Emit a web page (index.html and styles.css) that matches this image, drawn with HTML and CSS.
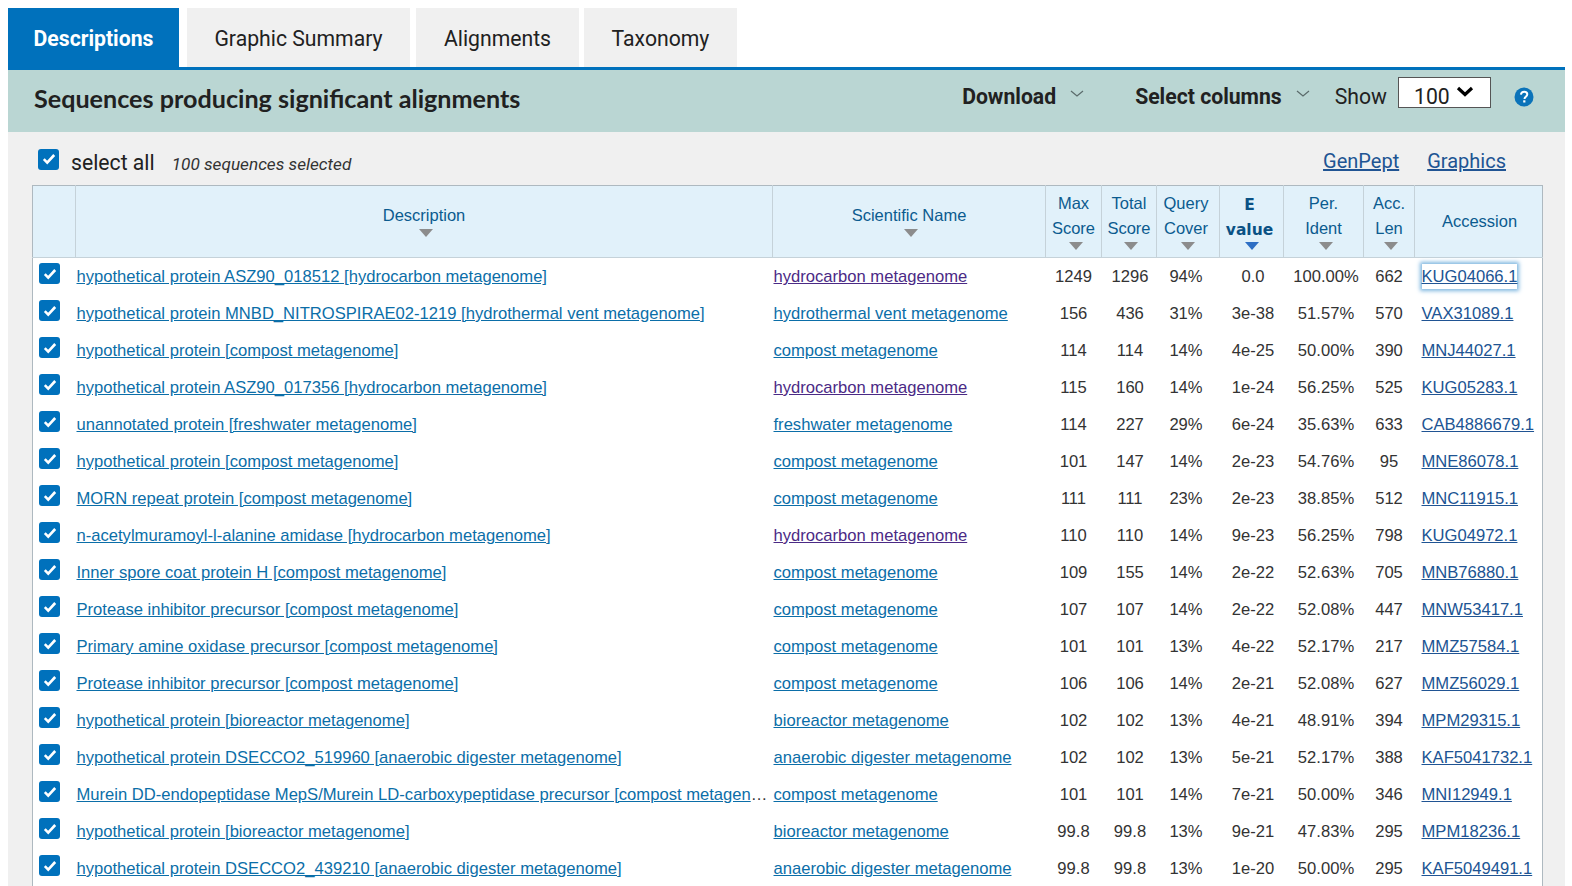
FILE: index.html
```html
<!DOCTYPE html>
<html lang="en">
<head>
  <meta charset="UTF-8" />
  <title>Descriptions</title>
  <link rel="stylesheet" href="styles.css">
</head>
<body>
  <div class="page">
    <nav class="tabs">
      <a class="tab active">Descriptions</a>
      <a class="tab tab-graphic">Graphic Summary</a>
      <a class="tab tab-align">Alignments</a>
      <a class="tab tab-tax">Taxonomy</a>
    </nav>

    <header class="band">
      <h1>Sequences producing significant alignments</h1>
      <div class="band-right">
        <span class="menu menu-download">Download</span>
        <svg class="chev chev-download" width="14" height="8" viewBox="0 0 14 8"><path d="M1 1l6 5 6-5" fill="none" stroke="#5b6b6b" stroke-width="1.2"/></svg>
        <span class="menu menu-select">Select columns</span>
        <svg class="chev chev-select" width="14" height="8" viewBox="0 0 14 8"><path d="M1 1l6 5 6-5" fill="none" stroke="#5b6b6b" stroke-width="1.2"/></svg>
        <span class="show">Show</span>
        <span class="select-box"><span class="select-value">100</span>
          <svg class="select-arrow" width="18" height="11" viewBox="0 0 18 11"><path d="M2 2l7 6.500 7-6.500" fill="none" stroke="#000" stroke-width="3.200"/></svg>
        </span>
        <svg class="help" width="20" height="20" viewBox="0 0 20 20"><circle cx="10" cy="10" r="9.5" fill="#0b73b9"/><path d="M6.9 7.6c.2-1.9 1.5-2.9 3.3-2.9 1.9 0 3.1 1.100 3.100 2.600 0 1.300-.7 1.900-1.600 2.500-.8.500-1.100.9-1.100 1.700v.4" fill="none" stroke="#fff" stroke-width="2"/><rect x="9.200" y="13.300" width="2.200" height="2.200" fill="#fff"/></svg>
      </div>
    </header>

    <section class="panel">
      <div class="toolbar">
        <span class="check check-all"><svg width="14" height="12" viewBox="0 0 14 12"><path d="M1.800 6.200l3.400 3.400 7-7.600" fill="none" stroke="#fff" stroke-width="2.600"/></svg></span>
        <span class="select-all">select all</span>
        <em class="selected">100 sequences selected</em>
        <span class="links"><a>GenPept</a><a>Graphics</a></span>
      </div>

      <table class="results">
        <colgroup>
          <col class="c-check"><col class="c-desc"><col class="c-sci"><col class="c-max"><col class="c-total"><col class="c-cover"><col class="c-eval"><col class="c-ident"><col class="c-len"><col class="c-acc">
        </colgroup>
        <thead>
          <tr>
            <th></th>
            <th><span class="head-one">Description</span><i class="sort"></i></th>
            <th><span class="head-one">Scientific Name</span><i class="sort"></i></th>
            <th>Max<br>Score<i class="sort"></i></th>
            <th>Total<br>Score<i class="sort"></i></th>
            <th>Query<br>Cover<i class="sort"></i></th>
            <th class="sorted">E<br>value<i class="sort"></i></th>
            <th>Per.<br>Ident<i class="sort"></i></th>
            <th>Acc.<br>Len<i class="sort"></i></th>
            <th class="head-acc">Accession</th>
          </tr>
        </thead>
        <tbody id="rows"></tbody>
      </table>
    </section>
  </div>
  <script src="rows.js"></script>
</body>
</html>
```

FILE: styles.css
```css
* { box-sizing: border-box; }
html, body { height: 886px; overflow: hidden; }
body { margin: 0; padding: 8px 7px 0 8px; background: #fff; font-family: "Liberation Sans", Arial, sans-serif; color: #333; }

.tabs { display: flex; height: 59px; }
.tab { display: flex; align-items: center; justify-content: center; padding-top: 1px; background: #f0f0f0; color: #212121; font: 400 21.200px Roboto, sans-serif; margin-right: 6px; }
.tab.active { width: 171px; margin-right: 8px; background: #0071bc; color: #fff; font-weight: 700; }
.tab-graphic { width: 223px; }
.tab-align { width: 163px; margin-right: 5px; }
.tab-tax { width: 153px; }

.band { display: flex; align-items: center; justify-content: space-between; height: 65px; padding: 0 31px 7px 26px; background: #bad6d3; border-top: 3px solid #0071bc; }
.band h1 { margin: 0; font: 700 25.150px Lato, sans-serif; color: #212121; }
.band-right { display: flex; align-items: center; margin-top: -2px; color: #212121; font: 400 21.200px Roboto, sans-serif; }
.menu { font-weight: 700; }
.chev { margin: -6px 0 0 14px; }
.chev-download { margin-right: 51px; }
.chev-select { margin-right: 25px; }
.select-box { display: flex; align-items: center; width: 93px; height: 31px; margin: -9px 0 0 11px; padding-left: 15px; background: #fff; border: 1px solid #555; }
.select-value { padding-top: 8px; }
.select-arrow { margin: -2px 0 0 6px; }
.help { margin-left: 23px; }

.panel { height: 760px; padding: 0 23px 0 24px; background: #f0f0f0; }
.toolbar { display: flex; align-items: center; height: 53px; padding: 6px 36px 0 6px; }
.check { display: inline-flex; align-items: center; justify-content: center; width: 21px; height: 21px; border-radius: 3px; background: #0071bc; }
.check-all { margin-top: -5px; }
.select-all { margin: 2px 0 0 12px; font: 400 21.200px Roboto, sans-serif; color: #212121; }
.selected { margin: 4px 0 0 17px; font: italic 400 17.200px Roboto, sans-serif; color: #333; }
.links { margin: -2px 0 0 auto; display: flex; gap: 28px; }
.links a { color: #205493; text-decoration: underline; font: 400 20px Roboto, sans-serif; }

.results { width: 1510px; table-layout: fixed; border-collapse: collapse; background: #fff; border: 1px solid #aeb9c0; border-bottom: 0; }
.c-check { width: 43px; } .c-desc { width: 697px; } .c-sci { width: 273px; } .c-max { width: 56px; } .c-total { width: 55px; }
.c-cover { width: 63px; } .c-eval { width: 64px; } .c-ident { width: 80px; } .c-len { width: 51px; } .c-acc { width: 128px; }
.results thead tr { height: 72px; }
.results th { position: relative; padding: 0 0 12px; background: #e1f1fa; border-left: 1px solid #c5d2d9; border-bottom: 1px solid #c5d2d9; color: #0b5b8f; font-weight: 400; font-size: 16.500px; line-height: 25px; text-align: center; vertical-align: middle; }
.results th:first-child { border-left: 0; }
.results th:nth-child(6) { padding-right: 4px; }
.results th.sorted { padding: 0 4px 8px 0; font-family: "DejaVu Sans", sans-serif; font-weight: 700; font-size: 15.500px; color: #0a5184; }
.head-acc { padding: 0 0 0 2px !important; }
.sort { position: absolute; left: 50%; bottom: 20px; margin-left: -5px; width: 0; height: 0; border-left: 7px solid transparent; border-right: 7px solid transparent; border-top: 8px solid #8c8c8c; }
.sorted .sort { margin-left: -7px; border-top-color: #2e6fc4; }
.results th:nth-child(6) .sort { margin-left: -7px; }
.results th:nth-child(n+4) .sort { bottom: 7px; }

.results td { height: 37px; padding: 2px 0 0; font-size: 16.600px; white-space: nowrap; overflow: hidden; text-overflow: ellipsis; text-align: center; color: #333; }
.results td.left { padding: 2px 5px 0 1px; text-align: left; }
.results td a { color: #0b6ea8; text-decoration: underline; }
.results td a.visited { color: #4b2a85; }
.results td.cell-check { padding: 0 0 0 6px; text-align: left; vertical-align: middle; }
.results td.cell-check .check { display: flex; margin-top: -5px; }
.results td:nth-child(6) { padding-right: 4px; }
.results td:nth-child(7) { padding-left: 3px; }
.results td:nth-child(8) { padding-left: 5px; }
.results td:nth-child(5) { padding-left: 2px; }
.results td.cell-acc { padding: 2px 0 0 7px; text-align: left; overflow: visible; }
.results td.cell-acc a { color: #205493; }
.focused { box-shadow: 0 0 4px 2px #7fb7e0; background: #fff; padding: 3px 0; }
```

FILE: rows.js
```js
// filas de la tabla de resultados
var filas = [
  ["hypothetical protein ASZ90_018512 [hydrocarbon metagenome]", "hydrocarbon metagenome", "1249", "1296", "94%", "0.0", "100.00%", "662", "KUG04066.1"],
  ["hypothetical protein MNBD_NITROSPIRAE02-1219 [hydrothermal vent metagenome]", "hydrothermal vent metagenome", "156", "436", "31%", "3e-38", "51.57%", "570", "VAX31089.1"],
  ["hypothetical protein [compost metagenome]", "compost metagenome", "114", "114", "14%", "4e-25", "50.00%", "390", "MNJ44027.1"],
  ["hypothetical protein ASZ90_017356 [hydrocarbon metagenome]", "hydrocarbon metagenome", "115", "160", "14%", "1e-24", "56.25%", "525", "KUG05283.1"],
  ["unannotated protein [freshwater metagenome]", "freshwater metagenome", "114", "227", "29%", "6e-24", "35.63%", "633", "CAB4886679.1"],
  ["hypothetical protein [compost metagenome]", "compost metagenome", "101", "147", "14%", "2e-23", "54.76%", "95", "MNE86078.1"],
  ["MORN repeat protein [compost metagenome]", "compost metagenome", "111", "111", "23%", "2e-23", "38.85%", "512", "MNC11915.1"],
  ["n-acetylmuramoyl-l-alanine amidase [hydrocarbon metagenome]", "hydrocarbon metagenome", "110", "110", "14%", "9e-23", "56.25%", "798", "KUG04972.1"],
  ["Inner spore coat protein H [compost metagenome]", "compost metagenome", "109", "155", "14%", "2e-22", "52.63%", "705", "MNB76880.1"],
  ["Protease inhibitor precursor [compost metagenome]", "compost metagenome", "107", "107", "14%", "2e-22", "52.08%", "447", "MNW53417.1"],
  ["Primary amine oxidase precursor [compost metagenome]", "compost metagenome", "101", "101", "13%", "4e-22", "52.17%", "217", "MMZ57584.1"],
  ["Protease inhibitor precursor [compost metagenome]", "compost metagenome", "106", "106", "14%", "2e-21", "52.08%", "627", "MMZ56029.1"],
  ["hypothetical protein [bioreactor metagenome]", "bioreactor metagenome", "102", "102", "13%", "4e-21", "48.91%", "394", "MPM29315.1"],
  ["hypothetical protein DSECCO2_519960 [anaerobic digester metagenome]", "anaerobic digester metagenome", "102", "102", "13%", "5e-21", "52.17%", "388", "KAF5041732.1"],
  ["Murein DD-endopeptidase MepS/Murein LD-carboxypeptidase precursor [compost metagenome]", "compost metagenome", "101", "101", "14%", "7e-21", "50.00%", "346", "MNI12949.1"],
  ["hypothetical protein [bioreactor metagenome]", "bioreactor metagenome", "99.8", "99.8", "13%", "9e-21", "47.83%", "295", "MPM18236.1"],
  ["hypothetical protein DSECCO2_439210 [anaerobic digester metagenome]", "anaerobic digester metagenome", "99.8", "99.8", "13%", "1e-20", "50.00%", "295", "KAF5049491.1"]
];

var check = '<span class="check"><svg width="14" height="12" viewBox="0 0 14 12"><path d="M1.800 6.200l3.400 3.400 7-7.600" fill="none" stroke="#fff" stroke-width="2.600"/></svg></span>';
var html = "";
filas.forEach(function (f, i) {
  var visited = f[1] === "hydrocarbon metagenome" ? ' class="visited"' : "";
  var acc = i === 0 ? '<a class="focused">' + f[8] + "</a>" : "<a>" + f[8] + "</a>";
  html += "<tr>" +
    '<td class="cell-check">' + check + "</td>" +
    '<td class="left"><a>' + f[0] + "</a></td>" +
    '<td class="left"><a' + visited + ">" + f[1] + "</a></td>" +
    "<td>" + f[2] + "</td><td>" + f[3] + "</td><td>" + f[4] + "</td><td>" + f[5] + "</td><td>" + f[6] + "</td><td>" + f[7] + "</td>" +
    '<td class="cell-acc">' + acc + "</td>" +
    "</tr>";
});
document.getElementById("rows").innerHTML = html;
```
